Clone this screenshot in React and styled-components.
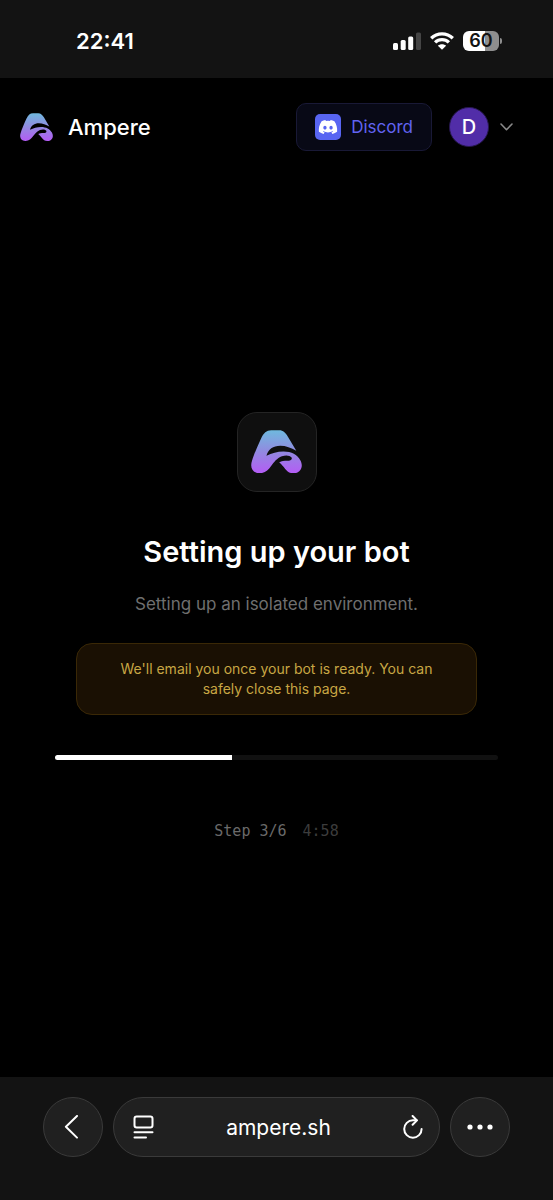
import React, { useId } from 'react';
import styled, { createGlobalStyle } from 'styled-components';
import { FaDiscord } from 'react-icons/fa';

const GlobalStyle = createGlobalStyle`
  * {
    box-sizing: border-box;
  }
  body {
    margin: 0;
    background: #000000;
    color: #ffffff;
    font-family: Inter, 'Liberation Sans', sans-serif;
  }
  button {
    font: inherit;
    color: inherit;
    padding: 0;
    border: none;
    background: none;
    cursor: pointer;
  }
`;

const Page = styled.div`
  display: flex;
  flex-direction: column;
  min-height: 100vh;
`;

const StatusBar = styled.div`
  display: flex;
  align-items: center;
  justify-content: space-between;
  height: 78px;
  padding: 4px 51px 0 76px;
  background: #131313;
`;

const Clock = styled.time`
  font-size: 22px;
  font-weight: 600;
`;

const StatusIcons = styled.div`
  display: flex;
  align-items: center;
  gap: 9px;
`;

const Battery = styled.div`
  display: flex;
  align-items: center;
  gap: 1px;
`;

const BatteryBody = styled.div`
  width: 36px;
  height: 20px;
  border-radius: 6px;
  background: linear-gradient(to right, #ffffff 60%, #8e8e8e 60%);
  color: #131313;
  font-size: 18px;
  font-weight: 600;
  line-height: 20px;
  text-align: center;
`;

const BatteryTip = styled.div`
  width: 2px;
  height: 6px;
  border-radius: 0 2px 2px 0;
  background: #8e8e8e;
`;

const Header = styled.header`
  display: flex;
  align-items: center;
  justify-content: space-between;
  padding: 25px 40px 24px 20px;
`;

const Brand = styled.a`
  display: flex;
  align-items: center;
  gap: 15px;
  color: #ffffff;
  font-size: 22px;
  font-weight: 500;
  text-decoration: none;
`;

const HeaderActions = styled.div`
  display: flex;
  align-items: center;
  gap: 17px;
`;

const DiscordLink = styled.a`
  display: flex;
  align-items: center;
  gap: 10px;
  height: 48px;
  padding: 0 18px;
  border: 1px solid #191936;
  border-radius: 10px;
  background: #080916;
  color: #6163f1;
  font-size: 17px;
  text-decoration: none;
`;

const DiscordBadge = styled.span`
  display: flex;
  align-items: center;
  justify-content: center;
  width: 26px;
  height: 26px;
  border-radius: 5px;
  background: #5865f2;
  color: #ffffff;
`;

const AccountButton = styled.button`
  display: flex;
  align-items: center;
  gap: 11px;
`;

const Avatar = styled.span`
  width: 40px;
  height: 40px;
  border: 1px solid #27184f;
  border-radius: 50%;
  background: #512da8;
  font-size: 20px;
  font-weight: 500;
  line-height: 38px;
  text-align: center;
`;

const Main = styled.main`
  flex: 1;
  display: flex;
  flex-direction: column;
  align-items: center;
  justify-content: center;
  padding: 0 55px;
  text-align: center;
`;

const LogoTile = styled.div`
  display: flex;
  align-items: center;
  justify-content: center;
  width: 80px;
  height: 80px;
  border: 1px solid #242424;
  border-radius: 20px;
  background: #0f0f0f;
`;

const Title = styled.h1`
  margin: 40px 0 0;
  font-size: 29px;
  font-weight: 600;
  line-height: 40px;
`;

const Subtitle = styled.p`
  margin: 20px 0 0;
  color: #6f6f6f;
  font-size: 17px;
  line-height: 24px;
`;

const Notice = styled.p`
  margin: 27px 21px 0;
  padding: 15px 34px;
  border: 1px solid #3a2806;
  border-radius: 16px;
  background: #1a1003;
  color: #c8a744;
  font-size: 14px;
  line-height: 20px;
`;

const ProgressTrack = styled.div`
  width: 100%;
  height: 5px;
  margin-top: 40px;
  border-radius: 3px;
  background: #111111;
  overflow: hidden;
`;

const ProgressFill = styled.div`
  height: 100%;
  background: #ffffff;
`;

const StepLine = styled.div`
  display: flex;
  gap: 16px;
  margin-top: 61px;
  color: #6a6a6a;
  font-family: 'DejaVu Sans Mono', 'Liberation Mono', monospace;
  font-size: 15px;
  line-height: 20px;
`;

const Elapsed = styled.span`
  color: #3c3c3c;
`;

const BrowserBar = styled.nav`
  display: flex;
  gap: 10px;
  height: 123px;
  padding: 20px 43px 0;
  background: #131313;
`;

const RoundButton = styled.button`
  display: flex;
  align-items: center;
  justify-content: center;
  flex-shrink: 0;
  width: 60px;
  height: 60px;
  border: 1px solid #3a3a3a;
  border-radius: 50%;
  background: #202020;
`;

const AddressBar = styled.div`
  flex: 1;
  display: flex;
  align-items: center;
  justify-content: space-between;
  height: 60px;
  padding: 0 16px 0 19px;
  border: 1px solid #3a3a3a;
  border-radius: 30px;
  background: #202020;
`;

const Address = styled.span`
  font-size: 21px;
`;

const IconButton = styled.button`
  display: flex;
`;

const AmpereLogo = ({ width }) => {
  const id = useId();
  return (
    <svg width={width} viewBox="0 0 152 130" aria-hidden="true">
      <defs>
        <linearGradient id={id} x1="0" y1="0" x2="0" y2="1">
          <stop offset="0" stopColor="#6fb9de" />
          <stop offset="0.5" stopColor="#9289e0" />
          <stop offset="1" stopColor="#b45cf5" />
        </linearGradient>
      </defs>
      <path
        fill={`url(#${id})`}
        d="M60 1H84C96 1 103 9 110 20L135 62C120 53 104 47 87 47C66 47 51 57 46 77C62 69 78 64 97 64C121 64 138 74 147 90C158 110 147 129 126 129C114 129 108 123 102 116C96 109 91 102 84 97C91 93 99 92 108 92C117 92 124 88 121 82C116 75 104 74 92 78C77 84 69 95 60 107C51 119 42 129 25 129C5 129-4 112 3 92C8 75 17 53 30 25C38 9 46 1 60 1Z"
      />
    </svg>
  );
};

const SignalIcon = () => (
  <svg width="28" height="18" viewBox="0 0 28 18" fill="#ffffff" aria-hidden="true">
    <rect x="0" y="11" width="5" height="7" rx="1.5" />
    <rect x="7.7" y="8" width="5" height="10" rx="1.5" />
    <rect x="15.2" y="4.5" width="5" height="13.5" rx="1.5" />
    <rect x="23" y="0.5" width="5" height="17.5" rx="1.5" fill="#454545" />
  </svg>
);

const WifiIcon = () => (
  <svg width="24" height="18" viewBox="0 0 24 18" aria-hidden="true">
    <g fill="none" stroke="#ffffff" strokeWidth="3.3">
      <path d="M1.2 6.3C7.3 0.3 16.7 0.3 22.8 6.3" />
      <path d="M5.1 10.4C9 6.7 15 6.7 18.9 10.4" />
    </g>
    <path fill="#ffffff" d="M12 17.8L7.9 13.8C10.1 11.8 13.9 11.8 16.1 13.8Z" />
  </svg>
);

const ChevronIcon = () => (
  <svg width="13" height="8" viewBox="0 0 13 8" fill="none" stroke="#8a8a8a" strokeWidth="1.6" strokeLinecap="round" strokeLinejoin="round" aria-hidden="true">
    <path d="M1 1L6.5 6.7L12 1" />
  </svg>
);

const BackIcon = () => (
  <svg width="18" height="24" viewBox="0 0 18 24" fill="none" stroke="#ffffff" strokeWidth="2" strokeLinecap="round" strokeLinejoin="round" aria-hidden="true">
    <path d="M13 1L1.9 11.8L13 22.6" />
  </svg>
);

const ReaderIcon = () => (
  <svg width="21" height="24" viewBox="0 0 21 24" fill="none" stroke="#ffffff" strokeWidth="2" strokeLinecap="round" aria-hidden="true">
    <rect x="1.5" y="1.5" width="18" height="11" rx="2.2" />
    <path d="M1.5 17.2H19.5M1.5 22.6H13" />
  </svg>
);

const ReloadIcon = () => (
  <svg width="20" height="24" viewBox="0 0 20 24" fill="none" stroke="#ffffff" strokeWidth="2" strokeLinecap="round" strokeLinejoin="round" aria-hidden="true">
    <path d="M18.6 14A8.7 8.7 0 1 1 9.9 5.3H13.5" />
    <path d="M9.6 1L14 5.4L9.6 9.8" />
  </svg>
);

const DotsIcon = () => (
  <svg width="26" height="6" viewBox="0 0 26 6" fill="#ffffff" aria-hidden="true">
    <circle cx="3" cy="3" r="2.6" />
    <circle cx="13" cy="3" r="2.6" />
    <circle cx="23" cy="3" r="2.6" />
  </svg>
);

const App = () => {
  const progress = 40;

  return (
    <Page>
      <GlobalStyle />
      <StatusBar>
        <Clock>22:41</Clock>
        <StatusIcons>
          <SignalIcon />
          <WifiIcon />
          <Battery>
            <BatteryBody>60</BatteryBody>
            <BatteryTip />
          </Battery>
        </StatusIcons>
      </StatusBar>
      <Header>
        <Brand href="#">
          <AmpereLogo width={33} />
          Ampere
        </Brand>
        <HeaderActions>
          <DiscordLink href="#">
            <DiscordBadge>
              <FaDiscord size={20} />
            </DiscordBadge>
            Discord
          </DiscordLink>
          <AccountButton aria-label="Account menu">
            <Avatar>D</Avatar>
            <ChevronIcon />
          </AccountButton>
        </HeaderActions>
      </Header>
      <Main>
        <LogoTile>
          <AmpereLogo width={51} />
        </LogoTile>
        <Title>Setting up your bot</Title>
        <Subtitle>Setting up an isolated environment.</Subtitle>
        <Notice>We'll email you once your bot is ready. You can safely close this page.</Notice>
        <ProgressTrack role="progressbar" aria-label="Setup progress" aria-valuenow={progress}>
          <ProgressFill style={{ width: `${progress}%` }} />
        </ProgressTrack>
        <StepLine>
          <span>Step 3/6</span>
          <Elapsed>4:58</Elapsed>
        </StepLine>
      </Main>
      <BrowserBar>
        <RoundButton aria-label="Back">
          <BackIcon />
        </RoundButton>
        <AddressBar>
          <IconButton aria-label="Page menu">
            <ReaderIcon />
          </IconButton>
          <Address>ampere.sh</Address>
          <IconButton aria-label="Reload">
            <ReloadIcon />
          </IconButton>
        </AddressBar>
        <RoundButton aria-label="More">
          <DotsIcon />
        </RoundButton>
      </BrowserBar>
    </Page>
  );
};

export default App;
